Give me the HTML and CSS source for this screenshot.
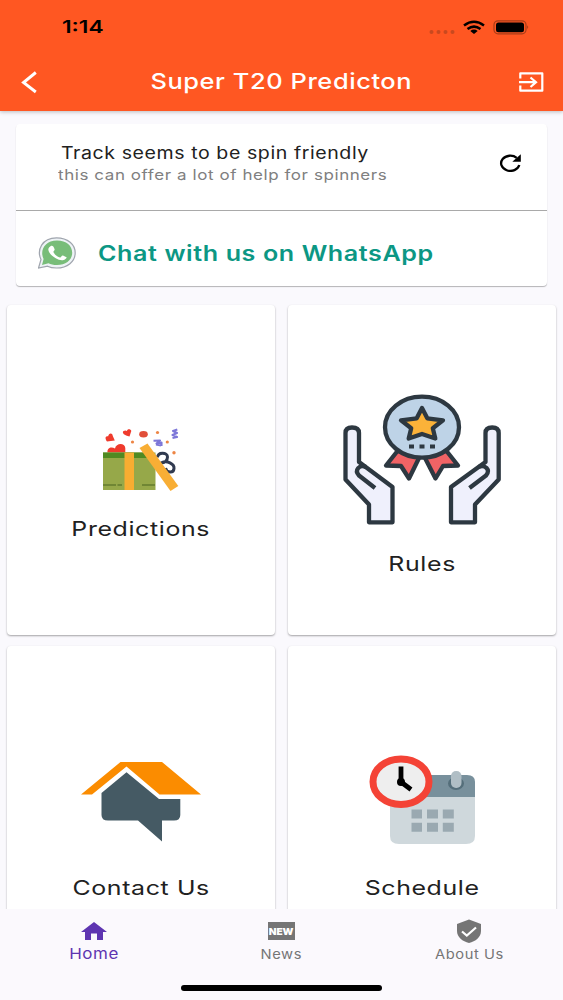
FILE: index.html
```html
<!DOCTYPE html>
<html lang="en">
<head>
  <meta charset="UTF-8">
  <meta name="viewport" content="width=device-width, initial-scale=1.0">
  <title>Super T20 Predicton</title>
  <link rel="stylesheet" href="styles.css">
</head>
<body>
  <header class="app-header">
    <div class="status-bar">
      <span class="time">1:14</span>
      <svg class="status-icons" width="100" height="16" viewBox="429 18 100 16">
        <g fill="#c9491f">
          <circle cx="431.5" cy="31" r="2"/>
          <circle cx="438.5" cy="31" r="2"/>
          <circle cx="445.5" cy="31" r="2"/>
          <circle cx="452.5" cy="31" r="2"/>
        </g>
        <g fill="none" stroke="#000" stroke-width="2.5">
          <path d="M464 24.5Q474 17 484 24.5"/>
          <path d="M467.5 28Q474 23.3 480.500 28"/>
        </g>
        <path d="M470.300 30Q474 27.200 477.700 30L474 33z"/>
        <rect x="494" y="19.800" width="32" height="13" rx="4" fill="none" stroke="#a83c18" stroke-width="1.200"/>
        <rect x="496" y="21.500" width="28" height="9.700" rx="2.500"/>
        <path d="M527.500 24.300q1.500 2 0 4z" fill="#6b2510"/>
      </svg>
    </div>
    <div class="title-bar">
      <svg class="back" width="18" height="24" viewBox="20 69 18 24">
        <path d="M35.800 71.500L23.500 81.500L35.800 91" fill="none" stroke="#fff" stroke-width="2.900"/>
      </svg>
      <h1 class="title">Super T20 Predicton</h1>
      <svg class="logout" width="26" height="22" viewBox="518 70 26 22">
        <g fill="none" stroke="#fff" stroke-width="2.200">
          <path d="M520.300 77.500V72.300H542.300V89.700H520.300V84.500" stroke-linejoin="round"/>
          <path d="M519 81.200H535M530.500 76.500L536 81.200L530.500 86"/>
        </g>
      </svg>
    </div>
  </header>

  <main class="content">
    <section class="info-card">
      <div class="tip">
        <div class="tip-text">
          <p class="tip-title">Track seems to be spin friendly</p>
          <p class="tip-sub">this can offer a lot of help for spinners</p>
        </div>
        <svg class="refresh" width="22" height="18" viewBox="499 154 22 18">
          <path d="M519.300 165A9.200 7.600 0 1 1 516.700 157.800" fill="none" stroke="#000" stroke-width="2.300"/>
          <path d="M520.800 154.300V161.800H512.300z"/>
        </svg>
      </div>
      <div class="chat">
        <svg width="38" height="32" viewBox="38 237 38 32">
          <path d="M38.500 268L41 259.500C36.500 250 42 237.800 56.500 237.800C68 237.800 75.200 244.500 75.200 252.800C75.200 261.500 67.500 268 56.500 268C53 268 49.500 267.200 47.500 266.200z" fill="#eef3f6" stroke="#a0a5ae" stroke-width="1.200"/>
          <path d="M42 265L43.600 259C39.500 251 44.500 240.600 57 240.600C66.500 240.600 72.200 246 72.200 252.800C72.200 260 66 265 57 265C53.500 265 50.500 264.400 48.500 263.200z" fill="#78bd79"/>
          <path d="M50.500 246.200C52.200 245 53.500 246 54.600 249.200C55 250.500 53 251.300 53.500 252.200C55 255 57.500 256.800 60 257.500C61.200 257.700 61.500 255.300 63 255.600L66.500 257.200C67.200 258 64.500 260.300 62 260.300C55.500 260 47 252.500 48.500 248.500Q49 247 50.500 246.200z" fill="#fff"/>
        </svg>
        <a class="chat-link">Chat with us on WhatsApp</a>
      </div>
    </section>

    <section class="tiles">
      <div class="tile tile-predictions">
        <svg width="80" height="66" viewBox="101 427 80 66">
          <g fill="#ef3b2d">
            <path d="M107.500 452.500C107 447 112 446.500 115 448.500C116 442.500 125 442.500 125.300 448V452.500z"/>
            <path d="M107 441.500C104.500 438 105.500 435.800 108.200 436.300C108.500 432.800 112.500 432.300 112.800 436L114.800 440.500z"/>
            <path d="M129.500 436.500C124.500 435.500 121.500 433 123.500 431Q125.500 429.800 127 431C127 428.500 131 428.800 131.300 431z"/>
          </g>
          <ellipse cx="143.500" cy="434.200" rx="4.300" ry="3.300" fill="#e14f39"/>
          <g fill="#ed8544">
            <circle cx="157.500" cy="432.500" r="1.600"/>
            <circle cx="132.500" cy="442" r="1.600"/>
            <circle cx="167.300" cy="442" r="1.600"/>
            <circle cx="174" cy="452.700" r="1.700"/>
          </g>
          <path d="M153.500 440.800L160 440.500L156.500 443.500L161.500 442.500V446M156 444.500L161 445.500M177.300 429.500L173 431L177 433L172.500 435L177 437L172.500 438" fill="none" stroke="#7d77d8" stroke-width="2.100" stroke-linejoin="round"/>
          <path d="M157.500 457.500C158 451.500 167.500 452.500 167.500 457C167.500 460.500 164.500 463 161.500 462.800C167 460 174.500 464 174 468.500C173.500 473.500 166.500 473 165.500 468" fill="none" stroke="#303a50" stroke-width="3"/>
          <path d="M103 452.500H155.500V490H103z" fill="#96a849"/>
          <path d="M103 452.500H146L149.500 458H103z" fill="#508a22"/>
          <path d="M103 485H116M117.500 485H122M142 485H155" stroke="#647b2e" stroke-width="1.600"/>
          <path d="M124.500 452.500H134V490H124.500z" fill="#f8ad31"/>
          <path d="M139.500 448L147.500 443.500L178.300 486L170.500 491z" fill="#f8ae35"/>
        </svg>
        <span class="tile-label">Predictions</span>
      </div>

      <div class="tile tile-rules">
        <svg width="160" height="132" viewBox="342 394 160 132">
          <g stroke="#2d3841" stroke-width="4.300" stroke-linejoin="round">
            <path d="M397.500 451L386 465.500L401 466L409 478.500L419.500 457zM446.500 451L458 465.500L443 466L435.500 478.500L424.500 457z" fill="#f16365"/>
            <ellipse cx="422" cy="427.200" rx="37" ry="30.500" fill="#bed3e7"/>
            <path d="M422 408L427.300 418.300L443 420.300L432.800 428.200L435.300 438.500L422 434L408.700 438.500L411.200 428.200L401 420.300L416.700 418.300z" fill="#fbb239"/>
            <path d="M345.500 479.500V433Q345.500 427.500 352 427.500Q359 427.500 359 433V462L392.500 487V522.300H369V504.500z" fill="#eff0fc"/>
            <path d="M498.700 479.500V433Q498.700 427.500 492.200 427.500Q485.500 427.500 485.500 433V462L451 487V522.300H475V504.500z" fill="#eff0fc"/>
            <path d="M375 488L359 475.500C354 470 359.500 464 366 467M469.500 488L486 475.500C491 470 485 464 478.500 467" fill="none"/>
          </g>
          <path d="M409 444.500h5v4h-5zM419.500 444.500h5v4h-5zM430 444.500h5v4h-5z" fill="#2d3841"/>
        </svg>
        <span class="tile-label">Rules</span>
      </div>

      <div class="tile tile-contact">
        <svg width="120" height="80" viewBox="81 762 120 80">
          <path d="M81 794.500L120.500 762H162L201 794.500H159.500L126.500 766.500L92 794.500z" fill="#fb8c00"/>
          <path d="M126.500 772.200L159 799H180.300V815Q180.300 820.500 174 820.500H162V841.500L138 820.500H108Q101.500 820.500 101.500 815V793z" fill="#455a64"/>
        </svg>
        <span class="tile-label">Contact Us</span>
      </div>

      <div class="tile tile-schedule">
        <svg width="106" height="90" viewBox="369 755 106 90">
          <path d="M390 794H475V836Q475 844 466 844H399Q390 844 390 836z" fill="#cfd8dc"/>
          <path d="M390 797V775H467Q475 775 475 782V797z" fill="#78909c"/>
          <ellipse cx="456" cy="783.500" rx="8" ry="6.500" fill="#546e7a"/>
          <rect x="451" y="771" width="10.500" height="17" rx="5" fill="#b0bec5"/>
          <path d="M411.500 809.500h10.500v9h-10.500zM427 809.500h11v9h-11zM442.800 809.500h11v9h-11zM411.500 822.700h10.500v9h-10.500zM427 822.700h11v9h-11zM442.800 822.700h11v9h-11z" fill="#9aa9b1"/>
          <ellipse cx="401" cy="781.700" rx="28" ry="22.800" fill="#eee" stroke="#f44336" stroke-width="7"/>
          <path d="M401 766.500V782L411 789.500" fill="none" stroke="#000" stroke-width="4.800"/>
          <circle cx="401" cy="782" r="4"/>
        </svg>
        <span class="tile-label">Schedule</span>
      </div>
    </section>
  </main>

  <nav class="bottom-nav">
    <a class="nav-item active">
      <svg width="26" height="20" viewBox="81 921 26 20">
        <path d="M94 922L107 932H103V940H97V933.500H91V940H85V932H81z" fill="#5e35b1"/>
      </svg>
      <span class="nav-label">Home</span>
    </a>
    <a class="nav-item">
      <span class="new-badge"><span class="new-text">NEW</span></span>
      <span class="nav-label">News</span>
    </a>
    <a class="nav-item">
      <svg class="shield" width="26" height="24" viewBox="456 919 26 24">
        <path d="M469 919.500L481 924V931C481 937 475.500 941.500 469 943C462.500 941.500 457 937 457 931V924z" fill="#757575"/>
        <path d="M462 931.500L466.800 935.500L476 927.500" fill="none" stroke="#fff" stroke-width="2.200"/>
      </svg>
      <span class="nav-label">About Us</span>
    </a>
    <div class="home-indicator"></div>
  </nav>
</body>
</html>
```

FILE: styles.css
```css
* {
  box-sizing: border-box;
}

body {
  margin: 0;
  height: 1000px;
  display: flex;
  flex-direction: column;
  overflow: hidden;
  font-family: Inter, "Liberation Sans", sans-serif;
  background-color: #faf9fd;
  color: #212121;
}

svg {
  display: block;
  flex-shrink: 0;
}

h1, p {
  margin: 0;
}

/* Header */
.app-header {
  height: 111px;
  flex-shrink: 0;
  background-color: #ff5722;
  box-shadow: 0 1px 4px rgba(0, 0, 0, 0.25);
  z-index: 1;
}

.status-bar {
  height: 52px;
  padding: 1px 34px 0 62px;
  display: flex;
  align-items: center;
  justify-content: space-between;
}

.time {
  font-size: 17.5px;
  font-weight: 600;
  color: #000;
  transform: scaleX(1.3);
  transform-origin: left;
}

.title-bar {
  height: 59px;
  padding: 0 19px 0 20px;
  display: flex;
  align-items: center;
  justify-content: space-between;
}

.title {
  margin: 0 0 2px 7px;
  font-size: 22px;
  font-weight: 500;
  letter-spacing: 0.5px;
  color: #fff;
  transform: scaleX(1.155);
}

/* Info card */
.content {
  flex: 1;
  min-height: 0;
  overflow: hidden;
  padding: 13px 7px 0;
}

.info-card {
  height: 162px;
  margin: 0 9px 19px;
  background-color: #fff;
  border-radius: 4px;
  box-shadow: 0 1px 1px rgba(0, 0, 0, 0.28);
}

.tip {
  height: 87px;
  padding: 18px 26px 0 42px;
  display: flex;
  justify-content: space-between;
  border-bottom: 1px solid #a9a9a9;
}

.tip-text {
  white-space: nowrap;
}

.tip-title {
  margin-left: 3px;
  font-size: 17px;
  line-height: 22px;
  letter-spacing: 0.5px;
  transform: scaleX(1.15);
  transform-origin: left;
}

.tip-sub {
  font-size: 14.5px;
  line-height: 22px;
  letter-spacing: 0.5px;
  color: #808080;
  transform: scaleX(1.17);
  transform-origin: left;
}

.refresh {
  margin-top: 12px;
}

.chat {
  height: 75px;
  padding: 8px 0 0 22px;
  display: flex;
  align-items: center;
  gap: 22px;
}

.chat-link {
  padding-top: 1px;
  font-size: 21px;
  font-weight: 600;
  letter-spacing: 0.5px;
  color: #0c9784;
  white-space: nowrap;
  transform: scaleX(1.195);
  transform-origin: left;
}

/* Tiles */
.tiles {
  display: grid;
  grid-template-columns: 268px 268px;
  grid-auto-rows: 330px;
  gap: 11px 13px;
}

.tile {
  display: flex;
  flex-direction: column;
  align-items: center;
  background-color: #fff;
  border-radius: 4px;
  box-shadow: 0 1px 2px rgba(0, 0, 0, 0.35);
}

.tile-predictions {
  padding-top: 122px;
  gap: 22px;
}

.tile-rules {
  padding-top: 89px;
  gap: 24px;
}

.tile-contact {
  padding-top: 116px;
  gap: 32px;
}

.tile-schedule {
  padding-top: 109px;
  gap: 29px;
}

.tile-label {
  font-size: 20px;
  line-height: 28px;
  letter-spacing: 0.5px;
  transform: scaleX(1.245);
}

/* Bottom navigation */
.bottom-nav {
  position: relative;
  height: 91px;
  flex-shrink: 0;
  display: grid;
  grid-template-columns: repeat(3, 1fr);
  background-color: #fbf9fd;
}

.nav-item {
  display: flex;
  flex-direction: column;
  align-items: center;
  padding-top: 12px;
  gap: 3px;
  color: #757575;
}

.nav-label {
  font-size: 13px;
  line-height: 20px;
  letter-spacing: 0.5px;
  transform: scaleX(1.13);
}

.active {
  color: #5e35b1;
}

.active .nav-label {
  font-size: 15px;
}

.new-badge {
  width: 27px;
  height: 18px;
  margin: 1px 0;
  display: flex;
  align-items: center;
  justify-content: center;
  background-color: #757575;
}

.new-text {
  font-size: 9px;
  font-weight: 900;
  color: #fff;
  transform: scaleX(1.12);
}

.shield {
  margin: -2px 0;
}

.home-indicator {
  position: absolute;
  left: 181px;
  bottom: 9px;
  width: 201px;
  height: 6px;
  border-radius: 3px;
  background-color: #000;
}
```
